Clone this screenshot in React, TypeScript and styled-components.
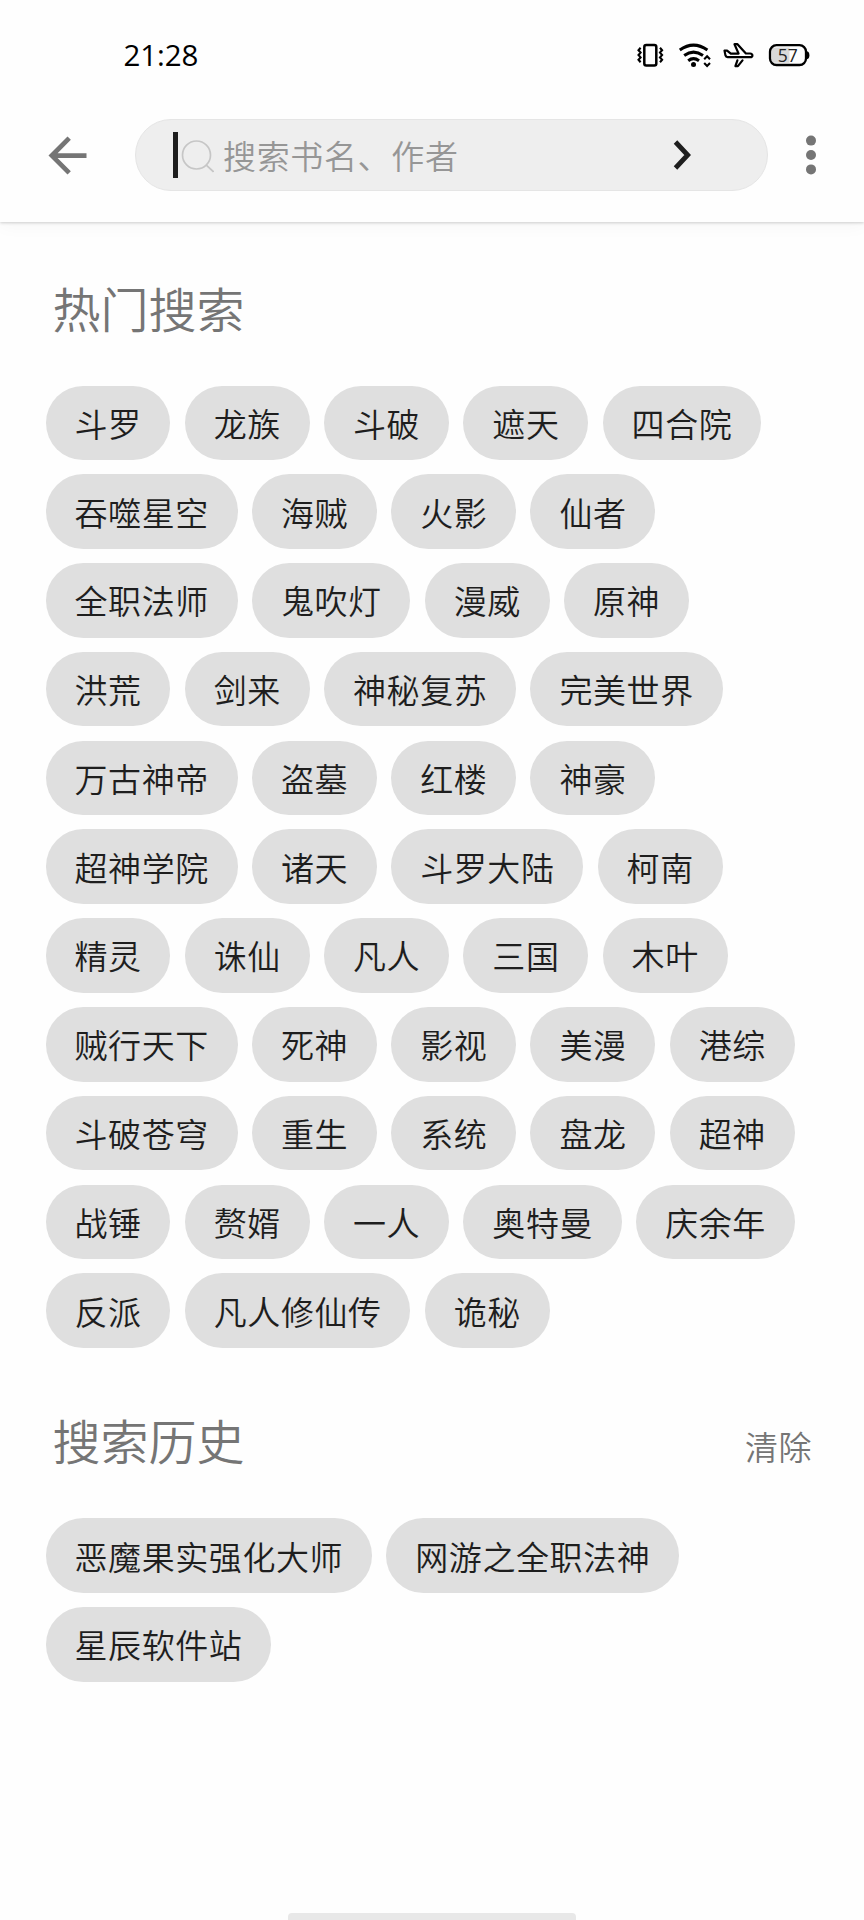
import React from 'react';
import styled, { createGlobalStyle } from 'styled-components';

const GlobalStyle = createGlobalStyle`
  * { box-sizing: border-box; }
  body {
    margin: 0;
    background: #fefefe;
    font-family: "Noto Sans CJK SC", sans-serif;
    font-weight: 350;
  }
  button, input { font: inherit; }
`;

const Screen = styled.div`
  width: 864px;
  height: 1920px;
  display: flex;
  flex-direction: column;
  overflow: hidden;
  background: #fefefe;
`;

const TopArea = styled.header`
  height: 222px;
  flex: none;
  box-shadow: 0 1px 3px rgba(0, 0, 0, 0.18), 0 5px 16px rgba(0, 0, 0, 0.03);
`;

const StatusBar = styled.div`
  height: 110px;
  display: flex;
  align-items: center;
  justify-content: space-between;
  padding: 0 54px 0 123.5px;
`;

const Clock = styled.time`
  font-family: "Open Sans", sans-serif;
  font-weight: 400;
  font-size: 29.5px;
  line-height: 40px;
  letter-spacing: -0.1px;
  color: #000;
`;

const StatusIcons = styled.div`
  display: flex;
  align-items: center;
  svg { display: block; }
`;

const Toolbar = styled.div`
  display: flex;
  align-items: flex-start;
  padding: 9px 33px 0 39px;
`;

const IconButton = styled.button<{ $width: number }>`
  width: ${(p) => p.$width}px;
  height: 72px;
  padding: 0;
  border: 0;
  background: none;
  display: flex;
  align-items: center;
  justify-content: center;
  svg { display: block; flex: none; }
`;

const SearchField = styled.div`
  width: 633px;
  height: 72px;
  margin: 0 24px 0 39px;
  padding: 0 75px 0 37px;
  display: flex;
  align-items: center;
  border: 1.5px solid #e5e5e5;
  border-radius: 36px;
  background: #eeeeee;
`;

const Caret = styled.span`
  width: 5px;
  height: 46px;
  background: #1e1e1e;
`;

const Placeholder = styled.span`
  flex: 1;
  margin-left: 9px;
  font-size: 33px;
  letter-spacing: 0.65px;
  line-height: 48px;
  color: #969696;
`;

const Section = styled.section<{ $top: number }>`
  padding: ${(p) => p.$top}px 45px 0 45.5px;
`;

const SectionHead = styled.div`
  height: 60px;
  display: flex;
  align-items: center;
  justify-content: space-between;
  padding: 0 7px;
`;

const Title = styled.h2`
  margin: 0;
  font-size: 48px;
  font-weight: 350;
  line-height: 60px;
  color: #757575;
`;

const ClearButton = styled.button`
  padding: 13px 0 0;
  border: 0;
  background: none;
  font-size: 33px;
  letter-spacing: 0.55px;
  line-height: 48px;
  color: #757575;
`;

const ChipList = styled.div`
  display: flex;
  flex-direction: column;
  gap: 14.2px;
  margin-top: 49px;
`;

const ChipRow = styled.div`
  display: flex;
  gap: 14.3px;
`;

const Chip = styled.span`
  height: 74.6px;
  padding: 0 28.8px 0 29px;
  display: flex;
  align-items: center;
  border-radius: 37.3px;
  background: #dfdfdf;
  font-size: 33px;
  letter-spacing: 0.58px;
  white-space: nowrap;
  color: #1e1e1e;
`;

const HomeIndicator = styled.div`
  width: 288px;
  height: 7px;
  margin: auto auto 0;
  border-radius: 4px 4px 0 0;
  background: #e8e8e8;
`;

const hotSearches = [
  ['斗罗', '龙族', '斗破', '遮天', '四合院'],
  ['吞噬星空', '海贼', '火影', '仙者'],
  ['全职法师', '鬼吹灯', '漫威', '原神'],
  ['洪荒', '剑来', '神秘复苏', '完美世界'],
  ['万古神帝', '盗墓', '红楼', '神豪'],
  ['超神学院', '诸天', '斗罗大陆', '柯南'],
  ['精灵', '诛仙', '凡人', '三国', '木叶'],
  ['贼行天下', '死神', '影视', '美漫', '港综'],
  ['斗破苍穹', '重生', '系统', '盘龙', '超神'],
  ['战锤', '赘婿', '一人', '奥特曼', '庆余年'],
  ['反派', '凡人修仙传', '诡秘'],
];

const history = [['恶魔果实强化大师', '网游之全职法神'], ['星辰软件站']];

const Chips = ({ rows }: { rows: string[][] }) => (
  <ChipList>
    {rows.map((row) => (
      <ChipRow key={row[0]}>
        {row.map((label) => (
          <Chip key={label}>{label}</Chip>
        ))}
      </ChipRow>
    ))}
  </ChipList>
);

const StatusGlyphs = () => (
  <svg width="176" height="30" viewBox="634 40 176 30" fill="none" stroke="#000">
    {/* vibrate */}
    <rect x="644.3" y="45" width="12" height="20.4" rx="2" strokeWidth="2.5" />
    <path d="M640.6 47.8l-2.1 2.4 2.1 2.4-2.1 2.4 2.1 2.4-2.1 2.4 2.1 2.4M660 47.8l2.1 2.4-2.1 2.4 2.1 2.4-2.1 2.4 2.1 2.4-2.1 2.4" strokeWidth="2.1" />
    {/* wifi */}
    <path d="M679.8 50Q693.5 40.3 707.4 50M684.2 55.5Q693.5 48.8 703 55.5M688.2 60.7Q693.5 56.6 699 60.7" strokeWidth="3" />
    <circle cx="693.5" cy="64.5" r="2.5" fill="#000" stroke="none" />
    <path d="M704.2 59.3l2.9-3 2.9 3M704.2 63l2.9 3 2.9-3" strokeWidth="2.1" />
    {/* airplane */}
    <path
      d="M724.5 50.6h2.6l3.7 3h7.8l-4.1-9.4h3l8.4 9.3h4.1q2.4.2 2.4 1.9t-2.2 1.8H727.6q-1.7 0-2.1-1.6ZM737.4 60.4l-2 5.7h2.5l4.6-5.7"
      strokeWidth="2.2"
      strokeLinejoin="round"
      strokeLinecap="round"
    />
    {/* battery */}
    <path d="M774 47.5h15.5v15.2H774q-2.5 0-2.5-2.6v-10q0-2.6 2.5-2.6Z" fill="#d9d9d9" stroke="none" />
    <rect x="770" y="45.2" width="36" height="19.8" rx="6.5" strokeWidth="2.3" />
    <path d="M807 51.2q2.4.6 2.4 4t-2.4 4Z" fill="#000" stroke="none" />
    <text x="787.7" y="61.5" textAnchor="middle" fontFamily="'Open Sans', sans-serif" fontSize="17.5" fontWeight="400" fill="#222" stroke="none">57</text>
  </svg>
);

export default function App() {
  return (
    <>
      <GlobalStyle />
      <Screen>
        <TopArea>
          <StatusBar>
            <Clock>21:28</Clock>
            <StatusIcons>
              <StatusGlyphs />
            </StatusIcons>
          </StatusBar>
          <Toolbar>
            <IconButton $width={57} aria-label="返回">
              <svg width="57" height="57" viewBox="0 0 24 24" fill="#757575">
                <path d="M20 11H7.83l5.59-5.59L12 4l-8 8 8 8 1.41-1.41L7.83 13H20v-2z" />
              </svg>
            </IconButton>
            <SearchField>
              <Caret />
              <svg width="36" height="36" viewBox="0 0 36 36" fill="none" stroke="#c6c6c6" strokeWidth="1.7">
                <circle cx="18.5" cy="18" r="14" />
                <path d="M28.3 28.2l7.2 6.6" />
              </svg>
              <Placeholder>搜索书名、作者</Placeholder>
              <svg width="20" height="32" viewBox="0 0 20 32" fill="none" stroke="#1e1e1e" strokeWidth="4.8">
                <path d="M3.5 3L15.7 16 3.5 29" />
              </svg>
            </SearchField>
            <IconButton $width={38} aria-label="更多">
              <svg width="12" height="40" viewBox="0 0 12 40" fill="#757575">
                <circle cx="6" cy="5.6" r="5" />
                <circle cx="6" cy="20" r="5" />
                <circle cx="6" cy="34.4" r="5" />
              </svg>
            </IconButton>
          </Toolbar>
        </TopArea>
        <Section $top={54.5}>
          <SectionHead>
            <Title>热门搜索</Title>
          </SectionHead>
          <Chips rows={hotSearches} />
        </Section>
        <Section $top={61.5}>
          <SectionHead>
            <Title>搜索历史</Title>
            <ClearButton>清除</ClearButton>
          </SectionHead>
          <Chips rows={history} />
        </Section>
        <HomeIndicator />
      </Screen>
    </>
  );
}
